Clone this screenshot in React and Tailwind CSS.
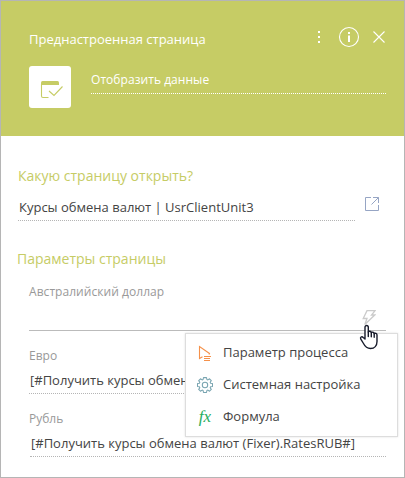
import React from "react";

function PageIcon() {
  return (
    <svg width="42" height="42" viewBox="0 0 42 42" fill="none" stroke="#c6cc65">
      <path d="M12 19v-2.500A1.500 1.500 0 0 1 13.500 15h15a1.500 1.500 0 0 1 1.500 1.500V19z" fill="#c6cc65" stroke="none" />
      <path d="M12.500 18v12a1.500 1.500 0 0 0 1.500 1.500h5.500M20 25l5 4.500 8.500-9" strokeWidth="1.100" />
    </svg>
  );
}

function HeaderActions() {
  return (
    <div className="flex h-5 items-center text-white">
      <svg width="4" height="20" viewBox="0 0 4 20" fill="currentColor">
        <path d="M1 4h2v2H1zM1 9h2v2H1zM1 14h2v2H1z" />
      </svg>
      <svg className="ml-[17px]" width="22" height="20" viewBox="0 0 22 20" overflow="visible" fill="none" stroke="currentColor">
        <circle cx="11" cy="10" r="9.500" strokeWidth="1.100" />
        <path d="M11 5v2M11 8.500V15" strokeWidth="2" />
      </svg>
      <svg className="mr-px ml-[13px]" width="12" height="12" viewBox="0 0 12 12" fill="none" stroke="currentColor">
        <path d="M.5.5l11 11M11.500.5l-11 11" strokeWidth="1.100" />
      </svg>
    </div>
  );
}

function OpenIcon() {
  return (
    <svg width="14" height="14" viewBox="0 0 14 14" fill="none" stroke="#96a5c4">
      <path d="M6 .5H.5v13h13V8M8 .5h5.500V6M13.500.5L6.500 7.500" />
    </svg>
  );
}

function BoltIcon() {
  return (
    <svg width="14" height="16" viewBox="0 0 14 16" fill="none" stroke="#cbcbcb" strokeWidth="1.300">
      <path d="M5 .6h8L9.500 5h3.200L2.800 14.500 5 8.500H1.200z" />
    </svg>
  );
}

function ParameterIcon() {
  return (
    <svg width="16" height="16" viewBox="0 0 16 16" fill="none" stroke="#f5914a">
      <path d="M5.500 11.700L2.500 13.500V1.500l10 7-.5 1M7 11.500h7M7 13.500h6M7 15.500h6" strokeWidth="1.100" />
    </svg>
  );
}

function GearIcon() {
  return (
    <svg width="16" height="16" viewBox="0 0 16 16" fill="none" stroke="#78a4b0" strokeWidth="1.050" strokeLinejoin="round">
      <path d="M6.500.6h3l.4 1.900 1 .4 1.600-1.100 1.800 1.800-1.100 1.600.4 1 1.900.4v2.800l-1.900.4-.4 1 1.100 1.600-1.800 1.800-1.600-1.100-1 .4-.4 1.900h-3l-.4-1.900-1-.4-1.600 1.100-1.800-1.800 1.100-1.600-.4-1L.5 9.400V6.600l1.900-.4.4-1-1.100-1.600 1.800-1.800 1.600 1.100 1-.4z" />
      <circle cx="8" cy="8" r="2.700" />
    </svg>
  );
}

function FormulaIcon() {
  return (
    <span className="-mt-px block w-4 text-center font-['Liberation_Serif',serif] text-[17px] leading-4 text-[#27ae60] italic">
      fx
    </span>
  );
}

function HandCursor() {
  return (
    <svg className="absolute top-[323px] left-[358px]" width="21" height="26" viewBox="0 0 21 26" fill="#fff" stroke="#171b2b" strokeWidth="1.400" strokeLinejoin="round" strokeLinecap="round">
      <path d="M6 15V3.300C6 .8 9.300.8 9.300 3.300V8c.4-1.200 3-1 3 .7.500-1 2.900-.6 2.900 1 .8-.8 2.800-.3 2.800 1.300v6.500c0 4-2.500 7-6.500 7-3.500 0-5.500-2-7-5L1.800 15.200c-1-2 1-3.200 2.400-1.700z" />
      <path d="M9.300 8v4.500M12.300 8.700v4M15.200 9.700v3.500" fill="none" />
    </svg>
  );
}

function MenuItem({ icon, children }) {
  return (
    <div className="flex h-8 items-center">
      {icon}
      <span className="ml-[10px] pb-[2px] text-[13px] leading-5 whitespace-nowrap">{children}</span>
    </div>
  );
}

function Field({ label, value, className = "" }) {
  return (
    <div className="h-[63px] pt-[15px]">
      <div className="h-5 text-[12px] leading-5 text-[#999]">{label}</div>
      <div className={`mt-1 h-6 border-b border-dotted border-[#b5b5b5] pl-px text-[13px] leading-5 whitespace-nowrap ${className}`}>
        {value}
      </div>
    </div>
  );
}

export default function App() {
  return (
    <div className="relative h-[478px] w-[405px] overflow-hidden border border-[#b5b5b5] bg-white font-['Open_Sans',sans-serif] text-[#444]">
      <header className="h-[135px] bg-[#c6cc65] pt-[26px] pr-[18px] pl-7 text-white">
        <div className="flex h-5 items-start justify-between">
          <h1 className="mt-[2px] text-[13px] leading-5">Преднастроенная страница</h1>
          <HeaderActions />
        </div>
        <div className="mt-[19px] flex">
          <div className="h-[42px] w-[42px] rounded-[3px] bg-white">
            <PageIcon />
          </div>
          <div className="ml-5 h-[28px] flex-1 border-b border-dotted border-white pt-1 text-[12px] leading-5 tracking-[0.05px]">
            Отобразить данные
          </div>
        </div>
      </header>
      <main className="pr-[18px] pl-[17px]">
        <h2 className="pt-[30px] text-[14px] leading-5 text-[#c6cc65]">Какую страницу открыть?</h2>
        <div className="mt-[11px] flex">
          <div className="h-[24px] w-[337px] border-b border-dotted border-[#b5b5b5] pl-px text-[13px] leading-5">
            Курсы обмена валют | UsrClientUnit3
          </div>
          <div className="ml-[10px]">
            <OpenIcon />
          </div>
        </div>
        <h2 className="-ml-px pt-[28px] text-[14px] leading-5 text-[#c6cc65]">Параметры страницы</h2>
        <section className="pt-[13px] pl-[11px]">
          <div className="h-5 text-[12px] leading-5 tracking-[0.05px] text-[#999]">Австралийский доллар</div>
          <div className="flex h-[29px] items-end justify-end border-b border-[#bbb] pr-[10px] pb-[4px]">
            <BoltIcon />
          </div>
          <Field label="Евро" value="[#Получить курсы обмена" />
          <Field label="Рубль" value="[#Получить курсы обмена валют (Fixer).RatesRUB#]" className="ml-px" />
        </section>
      </main>
      <div className="absolute top-[332px] left-[184px] h-[104px] w-[213px] border border-[#ddd] bg-white pt-[3px] pl-[11px] shadow-[0_0_2px_rgba(0,0,0,0.12)]">
        <MenuItem icon={<ParameterIcon />}>Параметр процесса</MenuItem>
        <MenuItem icon={<GearIcon />}>Системная настройка</MenuItem>
        <MenuItem icon={<FormulaIcon />}>Формула</MenuItem>
      </div>
      <HandCursor />
    </div>
  );
}
